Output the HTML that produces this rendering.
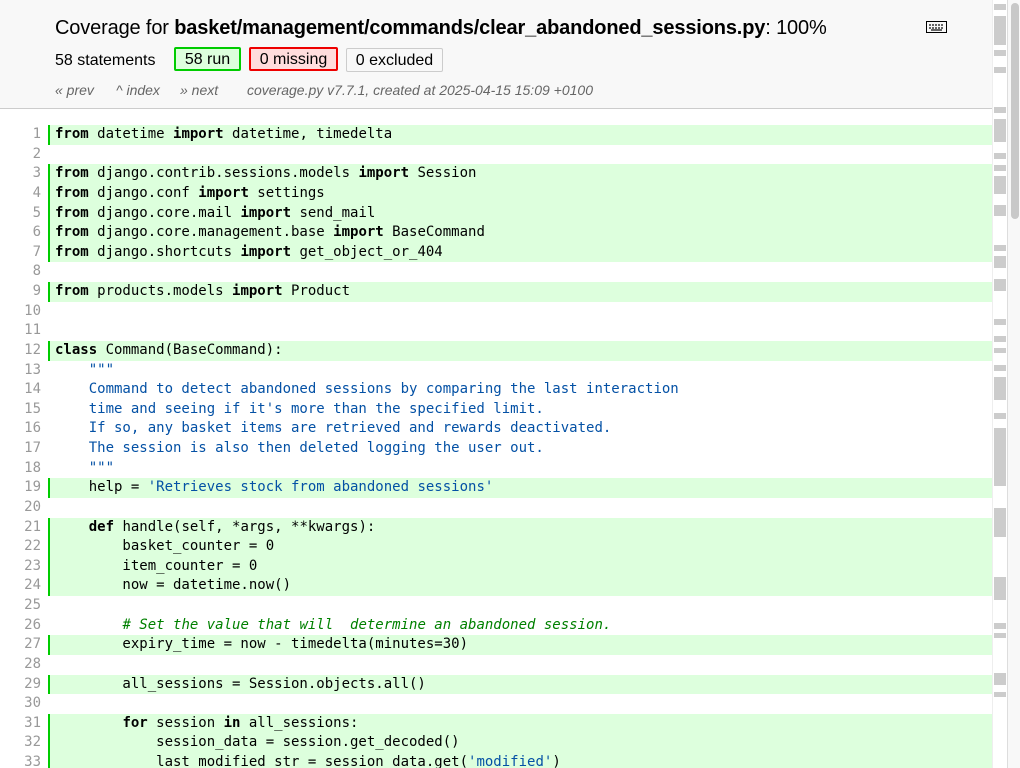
<!DOCTYPE html>
<html><head><meta charset="utf-8">
<style>
html,body{margin:0;padding:0;background:#fff;width:1020px;height:768px;overflow:hidden;}
body{font-family:"Liberation Sans",Helvetica,Arial,sans-serif;color:#000;position:relative;}
#hdr{position:absolute;left:0;top:0;width:992px;height:108px;background:#f8f8f8;border-bottom:1px solid #ccc;}
h1{position:absolute;left:55px;top:17px;margin:0;font-size:20px;font-weight:normal;white-space:nowrap;letter-spacing:-0.15px;}
h1 b{font-weight:bold;}
.st{position:absolute;top:52px;font-size:16px;}
.box{position:absolute;top:47px;height:20px;line-height:22px;border:2px solid;border-radius:2px;font-size:16px;text-align:center;box-sizing:content-box;}
.nav{position:absolute;top:82px;font-size:14px;font-style:italic;color:#666;white-space:nowrap;}
#kb{position:absolute;left:926px;top:21px;width:19px;height:10px;border:1px solid #000;}
#kb i{position:absolute;background:#666;height:2px;}
#src{position:absolute;left:0;top:125px;width:992px;font-family:"DejaVu Sans Mono","Liberation Mono",monospace;font-size:14px;}
.l{height:19.625px;line-height:19.625px;position:relative;white-space:pre;}
.l .n{position:absolute;left:0;width:41px;text-align:right;color:#999;}
.l .t{position:absolute;left:48px;right:0;top:0;bottom:0;padding-left:7px;}
.r .t{background:#dfd;border-left:2px solid #0c0;padding-left:5px;}
.k{font-weight:bold;}
.s{color:#0451a5;}
.c{color:#008000;font-style:italic;}
#map{position:absolute;left:992px;top:0;width:16px;height:768px;background:#fff;border-left:1px solid #eee;border-right:1px solid #ddd;box-sizing:border-box;}
#map i{position:absolute;left:1px;right:1px;background:#ccc;}
#sb{position:absolute;left:1008px;top:0;width:12px;height:768px;background:#f8f8f8;}
#sb i{position:absolute;left:3px;width:8px;top:3px;height:216px;background:#c8c8c8;border-radius:4px;}
</style></head><body>
<div id="hdr">
<h1>Coverage for <b>basket/management/commands/clear_abandoned_sessions.py</b>: 100%</h1>
<div id="kb"><i style="left:2px;top:2px;width:15px;height:2px;background:repeating-linear-gradient(90deg,#666 0 2px,transparent 2px 3px)"></i><i style="left:2px;top:5px;width:15px;background:repeating-linear-gradient(90deg,#666 0 2px,transparent 2px 3px)"></i><i style="left:4px;top:7px;width:11px;"></i></div>
<div class="st" style="left:55px">58 statements</div>
<div class="box" style="left:174px;width:63px;border-color:#0c0;background:#dfd">58 run</div>
<div class="box" style="left:249px;width:85px;border-color:#e00;background:#fdd">0 missing</div>
<div class="box" style="left:346px;width:95px;border:1px solid #ccc;height:22px;line-height:24px;top:48px;background:#f8f8f8">0 excluded</div>
<div class="nav" style="left:55px">« prev</div>
<div class="nav" style="left:116px">^ index</div>
<div class="nav" style="left:180px">» next</div>
<div class="nav" style="left:247px">coverage.py v7.7.1, created at 2025-04-15 15:09 +0100</div>
</div>
<div id="src">
<div class="l r"><span class="n">1</span><span class="t"><span class="k">from</span> datetime <span class="k">import</span> datetime, timedelta</span></div>
<div class="l"><span class="n">2</span><span class="t"></span></div>
<div class="l r"><span class="n">3</span><span class="t"><span class="k">from</span> django.contrib.sessions.models <span class="k">import</span> Session</span></div>
<div class="l r"><span class="n">4</span><span class="t"><span class="k">from</span> django.conf <span class="k">import</span> settings</span></div>
<div class="l r"><span class="n">5</span><span class="t"><span class="k">from</span> django.core.mail <span class="k">import</span> send_mail</span></div>
<div class="l r"><span class="n">6</span><span class="t"><span class="k">from</span> django.core.management.base <span class="k">import</span> BaseCommand</span></div>
<div class="l r"><span class="n">7</span><span class="t"><span class="k">from</span> django.shortcuts <span class="k">import</span> get_object_or_404</span></div>
<div class="l"><span class="n">8</span><span class="t"></span></div>
<div class="l r"><span class="n">9</span><span class="t"><span class="k">from</span> products.models <span class="k">import</span> Product</span></div>
<div class="l"><span class="n">10</span><span class="t"></span></div>
<div class="l"><span class="n">11</span><span class="t"></span></div>
<div class="l r"><span class="n">12</span><span class="t"><span class="k">class</span> Command(BaseCommand):</span></div>
<div class="l"><span class="n">13</span><span class="t"><span class="s">    """</span></span></div>
<div class="l"><span class="n">14</span><span class="t"><span class="s">    Command to detect abandoned sessions by comparing the last interaction</span></span></div>
<div class="l"><span class="n">15</span><span class="t"><span class="s">    time and seeing if it's more than the specified limit.</span></span></div>
<div class="l"><span class="n">16</span><span class="t"><span class="s">    If so, any basket items are retrieved and rewards deactivated.</span></span></div>
<div class="l"><span class="n">17</span><span class="t"><span class="s">    The session is also then deleted logging the user out.</span></span></div>
<div class="l"><span class="n">18</span><span class="t"><span class="s">    """</span></span></div>
<div class="l r"><span class="n">19</span><span class="t">    help = <span class="s">'Retrieves stock from abandoned sessions'</span></span></div>
<div class="l"><span class="n">20</span><span class="t"></span></div>
<div class="l r"><span class="n">21</span><span class="t">    <span class="k">def</span> handle(self, *args, **kwargs):</span></div>
<div class="l r"><span class="n">22</span><span class="t">        basket_counter = 0</span></div>
<div class="l r"><span class="n">23</span><span class="t">        item_counter = 0</span></div>
<div class="l r"><span class="n">24</span><span class="t">        now = datetime.now()</span></div>
<div class="l"><span class="n">25</span><span class="t"></span></div>
<div class="l"><span class="n">26</span><span class="t">        <span class="c"># Set the value that will  determine an abandoned session.</span></span></div>
<div class="l r"><span class="n">27</span><span class="t">        expiry_time = now - timedelta(minutes=30)</span></div>
<div class="l"><span class="n">28</span><span class="t"></span></div>
<div class="l r"><span class="n">29</span><span class="t">        all_sessions = Session.objects.all()</span></div>
<div class="l"><span class="n">30</span><span class="t"></span></div>
<div class="l r"><span class="n">31</span><span class="t">        <span class="k">for</span> session <span class="k">in</span> all_sessions:</span></div>
<div class="l r"><span class="n">32</span><span class="t">            session_data = session.get_decoded()</span></div>
<div class="l r"><span class="n">33</span><span class="t">            last_modified_str = session_data.get(<span class="s">'modified'</span>)</span></div>
</div>
<div id="map">
<i style="top:4px;height:6px"></i><i style="top:16px;height:29px"></i><i style="top:50px;height:6px"></i><i style="top:67px;height:6px"></i><i style="top:107px;height:6px"></i><i style="top:119px;height:23px"></i><i style="top:153px;height:6px"></i><i style="top:165px;height:6px"></i><i style="top:176px;height:18px"></i><i style="top:205px;height:11px"></i><i style="top:245px;height:6px"></i><i style="top:256px;height:12px"></i><i style="top:279px;height:12px"></i><i style="top:319px;height:6px"></i><i style="top:336px;height:6px"></i><i style="top:348px;height:5px"></i><i style="top:365px;height:6px"></i><i style="top:377px;height:23px"></i><i style="top:413px;height:6px"></i><i style="top:428px;height:58px"></i><i style="top:508px;height:29px"></i><i style="top:577px;height:23px"></i><i style="top:623px;height:6px"></i><i style="top:633px;height:5px"></i><i style="top:673px;height:12px"></i><i style="top:692px;height:5px"></i>
</div>
<div id="sb"><i></i></div>
</body></html>
